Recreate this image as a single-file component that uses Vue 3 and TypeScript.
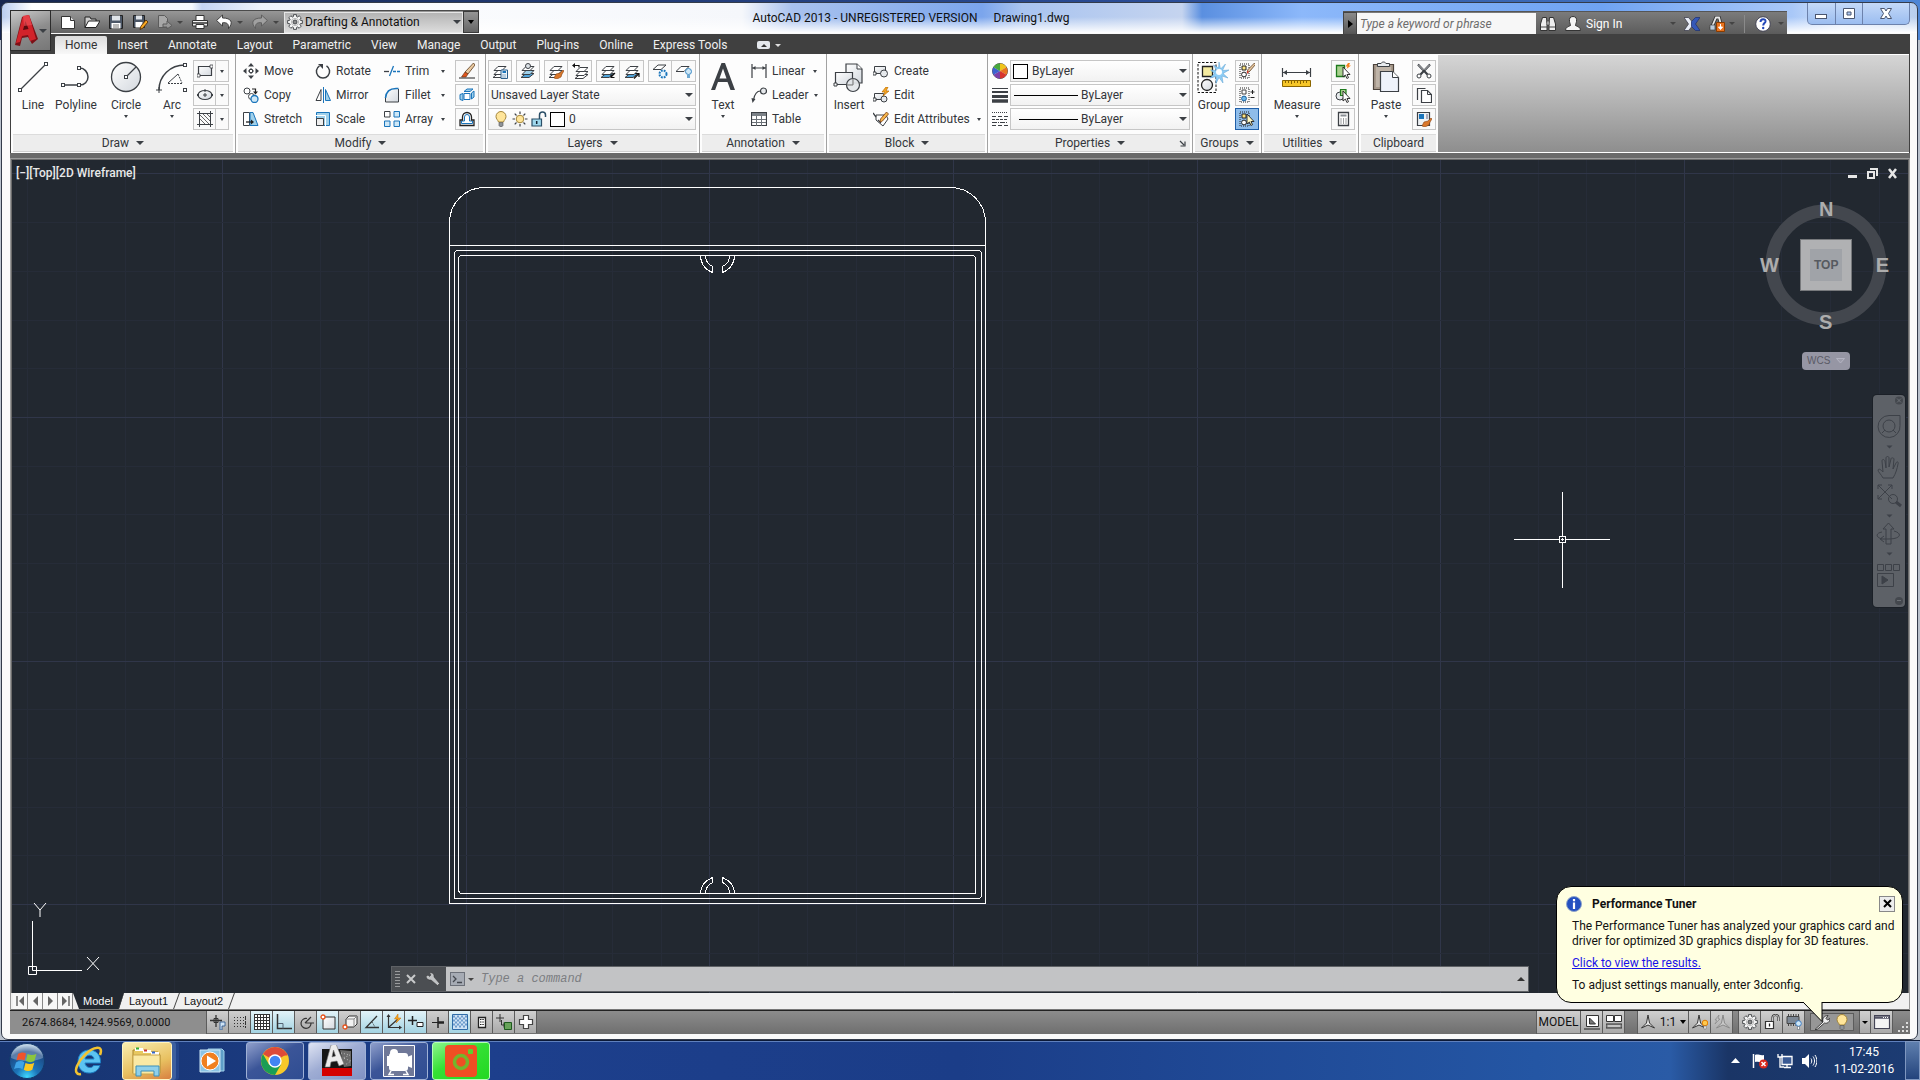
<script setup lang="ts">
import { computed, ref } from 'vue'

const sq = (x: number, y: number, s = 3) =>
  `<rect x="${x - s / 2}" y="${y - s / 2}" width="${s}" height="${s}" fill="#fff" stroke="#3c4045"/>`
const layerStack = (top = '#fff', mid = '#fff', low = '#fff') =>
  `<g stroke="#3c4045" stroke-width="1"><path d="M1 14.500l5-4h8l-5 4z" fill="${low}"/><path d="M2 11.500l4-4h8l-4 4z" fill="${mid}"/><path d="M2 7.500l4-4h8l-4 4z" fill="${top}"/></g>`
const brush = '<path d="M8 11l4-1 3-3 1 1-2 3-1 3-4 2-3-1z" fill="#d9772b" stroke="#8a4413" stroke-width=".6"/>'
const cursor = '<path d="M8 4v10l2.400-2 1.500 3.500 1.600-.8-1.500-3.200h3z" fill="#fff" stroke="#222" stroke-width=".9"/>'
const pick = '<path d="M3 3h4v4h-4z" fill="#ffe680" stroke="#222"/><circle cx="5" cy="11.500" r="2.400" fill="#fff" stroke="#222"/>'
const dots = '<path d="M1 1h9v14h-9z" fill="none" stroke="#222" stroke-dasharray="1 1"/>'

// Outline of an eight-toothed cog centred in a 16px box
const cog = Array.from({ length: 8 }, (_, i) => {
  const base = (i * Math.PI) / 4
  return [[-0.3, 5.600], [-0.2, 7.500], [0.2, 7.500], [0.3, 5.600]]
    .map(([da, r]) => `${(8 + r * Math.cos(base + da)).toFixed(2)} ${(8 + r * Math.sin(base + da)).toFixed(2)}`)
    .join('L')
}).join('L')

const icons: Record<string, string> = {
  line: `<path d="M4 28L28 4" stroke="#3c4045" stroke-width="1.300"/>${sq(3, 29)}${sq(29, 3)}`,
  polyline: `<path d="M4 24h16a8 8 0 0 0 8-8c0-5-4-9-8-9" fill="none" stroke="#3c4045" stroke-width="1.500"/>${sq(3, 24)}${sq(19, 24)}${sq(19, 7)}`,
  circle: `<circle cx="16" cy="16" r="14.500" fill="url(#soft)" stroke="#3c4045" stroke-width="1.300"/><path d="M16 16L26 6" stroke="#3c4045" stroke-width="1.200"/>${sq(16, 16)}`,
  arc: `<path d="M3 29C3 15 14 4 29 4" fill="none" stroke="#3c4045" stroke-width="1.500"/><path d="M12 22L22 13" stroke="#3c4045"/><path d="M12 22.500h15M22 13l4 9" stroke="#3c4045" stroke-dasharray="2 1" fill="none"/><path d="M0 29h6M3 26v6" stroke="#3c4045"/>${sq(29, 4)}${sq(29, 29)}`,
  rect: '<path d="M1.500 3.500h13v9h-13z" fill="url(#soft)" stroke="#3c4045" stroke-width="1.200"/><path d="M0 11h3v3H0zM13 2h3v3h-3z" fill="#fff" stroke="#3c4045" stroke-width=".8"/>',
  ellipse: '<ellipse cx="8" cy="8" rx="7" ry="4.500" fill="url(#soft)" stroke="#3c4045" stroke-width="1.200"/><path d="M6 8h4M8 6v4" stroke="#3c4045"/><path d="M0 7h2v2H0zM7 2.500h2v2H7zM14 7h2v2h-2z" fill="#3c4045"/>',
  hatch: '<path d="M0 2.500h16M0 13.500h16M2.500 0v16M13.500 0v16" stroke="#3c4045"/><path d="M3 8l5 5M3 4l9 9M6 3l7 7M10 3l3 3" stroke="#555" stroke-width=".9"/>',
  move: '<path d="M8 5v6M5 8h6" stroke="#3c4045"/><path d="M8 0l3 3.500H5zM8 16l3-3.500H5zM0 8l3.500-3v6zM16 8l-3.500-3v6z" fill="#3c4045"/><path d="M6.500 6.500h3v3h-3z" fill="#fff" stroke="#3c4045"/>',
  copy: '<circle cx="4" cy="4" r="3" fill="#fff" stroke="#3c4045"/><path d="M9 2h3.500v3" fill="none" stroke="#222" stroke-width="1.200"/><path d="M10 4.500h5l-2.500 3z" fill="#222"/><circle cx="8.500" cy="9.500" r="3" fill="#fff" stroke="#3c4045"/><circle cx="11.500" cy="12" r="3.500" fill="#cfe8f7" stroke="#1b75bb" stroke-width="1.300"/>',
  stretch: '<path d="M.5 1.500h6v13h-6z" fill="#fff" stroke="#3c4045"/><path d="M7 1.500h3l5 13H7z" fill="#9fd0ea" stroke="#1b75bb"/><path d="M3 11h6" stroke="#222" stroke-width="1.300"/><path d="M8 8.500l3 2.500-3 2.500z" fill="#222"/>',
  rotate: '<path d="M4.500 2.800A6.600 6.600 0 1 0 11.500 2.800" fill="none" stroke="#3c4045" stroke-width="1.500"/><path d="M3 1h5v5z" fill="#3c4045"/>',
  mirror: '<path d="M6 2.500v11H1z" fill="#fff" stroke="#3c4045"/><path d="M8.500 0v16" stroke="#1b75bb"/><path d="M10.500 2.500v11H15.500z" fill="#9fd0ea" stroke="#1b75bb"/>',
  scale: '<path d="M1.500 1.500h13v13h-13z" fill="#9fd0ea" stroke="#1b75bb"/><path d="M1.500 7.500h7v7h-7z" fill="#eee" stroke="#3c4045"/><path d="M1 4.500h9.500V15" fill="none" stroke="#fff"/>',
  trim: '<path d="M0 8.500h5" stroke="#3c4045" stroke-width="1.300"/><path d="M5.500 13L9.500 3" stroke="#1b75bb" stroke-width="1.300"/><path d="M9 8.500h7" stroke="#1b75bb" stroke-width="1.300" stroke-dasharray="3 1"/>',
  fillet: '<path d="M1.500 15C1.500 7 7 1.500 15 1.500V15z" fill="url(#soft)"/><path d="M1.500 10v5h13V2" fill="none" stroke="#3c4045"/><path d="M1.500 11C2 5 6 1.500 12 1.500h2.500" fill="none" stroke="#1b75bb" stroke-width="1.600"/>',
  array: '<path d="M.5 .5h5.500v5.500H.5z" fill="#fff" stroke="#3c4045"/><path d="M10 .5h5.500v5.500H10zM.5 10h5.500v5.500H.5zM10 10h5.500v5.500H10z" fill="#cfe8f7" stroke="#1b75bb"/>',
  erase: '<path d="M0 15h16" stroke="#222"/><path d="M14.500 0l1.500 2-7 9-3-2z" fill="#e9c9a0" stroke="#5a3c1e" stroke-width=".8"/><path d="M6 9l3 2-2 3H2.500z" fill="#e0551b" stroke="#5a2a10" stroke-width=".6"/>',
  explode: '<path d="M5 6.500h6v6H5z" fill="#fff" stroke="#1b75bb"/><path d="M1 7.500l3-1v7l-3-1zM12.500 6l2.500-2v6l-2.500 2zM5 4.500l3-2.500h6l-3 2.500z" fill="#9fd0ea" stroke="#1b75bb"/>',
  offset: '<path d="M5.500 10V6a2.500 2.500 0 0 1 5 0v4h3v2.500h-11V10z" fill="#fff" stroke="#1b75bb"/><path d="M1 14.500V9h2.500V6a4.500 4.500 0 0 1 9 0v3H15v5.500z" fill="none" stroke="#222" stroke-width="1.300"/>',
  layprops: layerStack() + '<path d="M9 7h6.500v8.500H9z" fill="#eaf4fb" stroke="#2c5f8c"/><path d="M10.500 9h3.500" stroke="#1b75bb" stroke-width="2"/><path d="M10.500 12h3.500M10.500 14h3.500" stroke="#2c5f8c" stroke-dasharray="1 1"/>',
  laycur: layerStack('#fff', '#9fd0ea', '#4fa5dc') + '<circle cx="8" cy="3" r="2.500" fill="#dde3e8" stroke="#3c4045"/>',
  laymatch: layerStack() + brush,
  layprev: `<g transform="translate(2 1)">${layerStack()}</g><path d="M0 2.500h6" stroke="#fff" stroke-width="4"/><path d="M2 2.500h5v2" fill="none" stroke="#111" stroke-width="1.200"/><path d="M0 2.500l3-2.500v5z" fill="#111"/>`,
  layiso: layerStack('#fff', '#fff', '#4fa5dc') + '<path d="M15 10l-4 4M11 11v3.500h3.500" fill="none" stroke="#111" stroke-width="1.200"/>',
  layuniso: layerStack('#fff', '#fff', '#4fa5dc') + '<path d="M10 15.500l5-5M11.500 10.500H15V14" fill="none" stroke="#111" stroke-width="1.200"/>',
  layfreeze: '<path d="M1 6.500l5-4.500h8l-5 4.500z" fill="#fff" stroke="#3c4045"/><circle cx="11" cy="11" r="3.500" fill="#eaf6fd" stroke="#1b75bb" stroke-width="2" stroke-dasharray="1.800 1"/>',
  layoff: '<path d="M0 8.500l5-5h8l-5 5z" fill="#fff" stroke="#3c4045"/><circle cx="12.500" cy="8.500" r="3" fill="#cfe8f7" stroke="#3c8ac4"/><path d="M11 12h3v3h-3z" fill="#6fa9d2"/>',
  bulb: '<path d="M5.500 11C5 9 3 8 3 5.500a5 5 0 0 1 10 0C13 8 11 9 10.500 11z" fill="#ffe59a" stroke="#a3853a"/><path d="M6 11.500h4v3l-1 1.200H7l-1-1.200z" fill="#8d9297" stroke="#555" stroke-width=".6"/>',
  sun: '<circle cx="8" cy="8" r="3.800" fill="#ffe59a" stroke="#a3853a"/><path d="M8 .5v2.500M8 13v2.500M.5 8H3M13 8h2.500M2.700 2.700l1.800 1.800M11.500 11.500l1.800 1.800M13.300 2.700l-1.800 1.800M4.500 11.500l-1.800 1.800" stroke="#3c4045" stroke-width="1.200"/>',
  unlock: '<path d="M1 8h9.500v7H1z" fill="#9fd8ee" stroke="#2a4e66" stroke-width="1.200"/><path d="M8.500 8V4a3 3 0 0 1 6 0v2" fill="none" stroke="#2a4e66" stroke-width="1.500"/><path d="M5.700 10v3" stroke="#123" stroke-width="1.500"/>',
  text: '<path d="M4 29L14.500 2h3.500L28 29h-4.500l-3-8h-9.500l-2.900 8zM12.500 17.500h7L16 7.500z" fill="#3c4045" fill-rule="evenodd"/>',
  linear: '<path d="M1 1v14M15 1v14M1 5h14" stroke="#3c4045" stroke-width="1.200" fill="none"/><path d="M1.500 5l3-2v4zM14.500 5l-3-2v4z" fill="#3c4045"/>',
  leader: '<circle cx="12.500" cy="4" r="3" fill="#e6e9ec" stroke="#3c4045" stroke-width="1.200"/><path d="M9.500 4C6 4 3.500 7 2.500 13" fill="none" stroke="#3c4045" stroke-width="1.200"/><path d="M1.500 16L.5 11l4 1z" fill="#3c4045"/>',
  table: '<path d="M.5 1.500h15v13H.5z" fill="#fff" stroke="#3c4045" stroke-width="1.200"/><path d="M1 2h14v3H1z" fill="#7b8187"/><path d="M5.500 5v10M10.500 5v10M1 8.500h14M1 11.500h14" stroke="#6b7177"/>',
  insert: '<path d="M13 3h11l5 5v14H13z" fill="url(#soft)" stroke="#3c4045" stroke-width="1.200"/><path d="M24 3v5h5" fill="#fff" stroke="#3c4045"/><path d="M2.500 11.500h17v12h-17z" fill="url(#soft)" stroke="#3c4045" stroke-width="1.200"/><circle cx="20" cy="24" r="6.500" fill="#e2e5e9" fill-opacity=".9" stroke="#3c4045" stroke-width="1.200"/><path d="M20 17.500V24h-6.500" fill="none" stroke="#777"/><path d="M1 22h3v3H1z" fill="#fff" stroke="#3c4045"/>',
  create: '<path d="M1.500 3.500h11v7h-11z" fill="url(#soft)" stroke="#3c4045"/><circle cx="11" cy="10.500" r="3.500" fill="#e6e9ec" stroke="#3c4045"/><path d="M0 9h3v3H0z" fill="#fff" stroke="#3c4045"/>',
  edit: '<path d="M1.500 6.500h9v6h-9z" fill="url(#soft)" stroke="#3c4045"/><circle cx="11" cy="12" r="3" fill="#e6e9ec" stroke="#3c4045"/><path d="M0 11h3v3H0z" fill="#fff" stroke="#3c4045"/><path d="M13 0L9 5h3l-2 4 6-5h-3l2-4z" fill="#f7a823" stroke="#b86a00" stroke-width=".7"/>',
  editattr: '<path d="M3 4h10l2 4-5 7-7-6z" fill="#fff" stroke="#3c4045"/><path d="M0 2l3 4M5 9l3 3" stroke="#3c4045" stroke-width="1.300"/><path d="M13.500 1l2 2-6 7-2.500 1 .5-3z" fill="#f7b64a" stroke="#7a3c10" stroke-width=".8"/>',
  color: '<circle cx="8" cy="8" r="7.500" fill="#ddd" stroke="#555"/><path d="M8 8V.5a7.500 7.500 0 0 1 6.500 3.800z" fill="#f0c419"/><path d="M8 8l6.500-3.700a7.500 7.500 0 0 1 0 7.500z" fill="#e8731f"/><path d="M8 8l6.500 3.800A7.500 7.500 0 0 1 8 15.500z" fill="#d8342c"/><path d="M8 8v7.500a7.500 7.500 0 0 1-6.500-3.700z" fill="#7c3fa8"/><path d="M8 8l-6.500 3.800a7.500 7.500 0 0 1 0-7.500z" fill="#3c62d0"/><path d="M8 8L1.500 4.300A7.500 7.500 0 0 1 8 .5z" fill="#48a83c"/>',
  weight: '<path d="M0 1.500h16" stroke="#3c4045"/><path d="M0 5h16" stroke="#3c4045" stroke-width="2"/><path d="M0 9.500h16" stroke="#3c4045" stroke-width="3"/><path d="M0 14h16" stroke="#3c4045" stroke-width="3.500"/>',
  ltype: '<g stroke="#3c4045"><path d="M0 1.500h16" stroke-dasharray="1 1"/><path d="M0 5.500h16" stroke-dasharray="4 2"/><path d="M0 8.500h16" stroke-dasharray="3 1"/><path d="M0 11.500h16" stroke-dasharray="5 1 1 1"/><path d="M0 14.500h16" stroke-dasharray="4 2"/></g>',
  group: '<path d="M1 1.500h18v30H1z" fill="none" stroke="#111" stroke-dasharray="2.500 1.500"/><path d="M5.500 5.500h10v10h-10z" fill="#f5eba0" stroke="#222" stroke-width="1.300"/><circle cx="10" cy="24" r="5.500" fill="url(#soft)" stroke="#222" stroke-width="1.300"/><path d="M22 1l1.500 7 5-5-3 6.500 6.500-.5-6 3.500 5 4.500-6-2 1 7-4-5.500-3 6v-7l-6 1.500 4.500-4.500-4-3.500 6 .5-3-5.500 5 3z" fill="#8ecdf5" stroke="#5a9fd0" stroke-width=".5"/><circle cx="22" cy="11" r="3" fill="#fff"/>',
  ungroup: dots + pick + '<path d="M15.500 0l1 1.500-6 7-2.500 1 1-3z" fill="#e9c9a0" stroke="#5a3c1e" stroke-width=".8"/><path d="M8 7.500l2 1.500-2 2z" fill="#d8342c"/>',
  groupedit: '<path d="M1 1h9v14h-9z" fill="none" stroke="#222" stroke-dasharray="1 1"/><path d="M3 3h4v4h-4z" fill="#fff" stroke="#444"/><circle cx="5" cy="11.500" r="2.400" fill="#6cb8ea" stroke="#1b5f9c"/><path d="M11.500 5h4M13.500 3v4M11.500 10.500h4" stroke="#222"/>',
  groupsel: dots + pick + '<path d="M8 3v10l2.400-2 1.500 3.500 1.600-.8-1.500-3.200h3z" fill="#fff8c0" stroke="#222" stroke-width=".9"/>',
  measure: '<path d="M1.500 7v9M29.500 7v9M2 11.500h27" stroke="#3c4045" stroke-width="1.200"/><path d="M2 11.500l4-2.500v5zM29 11.500l-4-2.500v5z" fill="#3c4045"/><path d="M1.500 19.500h28v6h-28z" fill="#f6c628" stroke="#8a6500"/><path d="M4.500 20v2M7.500 20v2M10.500 20v3M13.500 20v2M16.500 20v2M19.500 20v3M22.500 20v2M25.500 20v2" stroke="#8a6500"/>',
  qselect: '<path d="M1.500 2.500h8v11h-8z" fill="#a9d08e" stroke="#1d7a1d" stroke-width="1.300"/>' + cursor + '<path d="M13 0l-2.500 3.500h2L11.500 6 16 2.500h-2L15 0z" fill="#f58220"/>',
  selall: '<circle cx="5" cy="9" r="4" fill="#e6e9ec" stroke="#3c4045"/><path d="M5.500 2.500h5.500v6h-5.500z" fill="#a9d08e" stroke="#1d7a1d" stroke-width="1.200"/>' + cursor,
  calc: '<path d="M3.500 1.500h10v13h-10z" fill="#fff" stroke="#3c4045" stroke-width="1.300"/><path d="M5.500 3.500h6v2h-6z" fill="#8a8f94"/><path d="M5.500 8h6M5.500 10h6M5.500 12h6" stroke="#3c4045" stroke-dasharray="1 1.500"/>',
  paste: '<path d="M3.500 3.500h20v25h-20z" fill="#a89a8c" stroke="#4d443c" stroke-width="1.200"/><path d="M6 6h15v20H6z" fill="#bfb4a8"/><path d="M7.500 5.500v-3h3.500c1-2 4-2 5 0h3.500v3z" fill="#e9ecef" stroke="#3c4045"/><path d="M10.500 10.500h12l6 6v14h-18z" fill="#eef2fa" stroke="#3c4045" stroke-width="1.200"/><path d="M22.500 10.500v6h6" fill="#fff" stroke="#3c4045"/>',
  cut: '<path d="M2 1.500l9.500 10M14 1.500L4.500 11.500" fill="none" stroke="#3c4045" stroke-width="2.200"/><path d="M2.500 2l5 5M13.500 2l-5 5" stroke="#fff" stroke-width=".7"/><circle cx="3" cy="13" r="2" fill="#fff" stroke="#3c4045"/><circle cx="13" cy="13" r="2" fill="#fff" stroke="#3c4045"/>',
  copyclip: '<path d="M1.500 13V1.500h8" fill="none" stroke="#3c4045" stroke-width="1.200"/><path d="M5.500 3.500h6l4 4v8h-10z" fill="#fff" stroke="#3c4045" stroke-width="1.200"/><path d="M11.500 3.500v4h4" fill="none" stroke="#3c4045"/>',
  matchprop: '<path d="M1.500 1.500h12v13h-12z" fill="#eef2f5" stroke="#3c4045" stroke-width="1.200"/><path d="M3 3h5v5H3z" fill="#1b75bb"/><path d="M10 3h2v5h-2z" fill="#aab"/>' + brush,
  new: '<path d="M1.500 2.500h9l4 4v8h-13z" fill="#fff" stroke="#333"/><path d="M10.500 2.500v4h4" fill="#ddd" stroke="#333"/>',
  open: '<path d="M1 13.500V3h5l1 2h5v2" fill="#ccc" stroke="#222"/><path d="M1 13.500L4.500 7H16l-4 6.500z" fill="#fff" stroke="#222"/>',
  save: '<path d="M1.500 1.500h13v13h-13z" fill="#4b5666" stroke="#222"/><path d="M4 1.500h8v5H4z" fill="#dfe3e8"/><path d="M3.500 9h9v5.500h-9z" fill="#fff"/><path d="M5 11h6M5 13h6" stroke="#777"/>',
  saveas: '<path d="M1.500 1.500h11v12h-11z" fill="#4b5666" stroke="#222"/><path d="M4 1.500h6v4H4z" fill="#dfe3e8"/><path d="M3.500 8h7v5.500h-7z" fill="#fff"/><path d="M14 6l2 2-5 6-3 1.500 1-3.500z" fill="#f7a823" stroke="#4a2500" stroke-width=".8"/>',
  export: '<path d="M2.500 1.500h6l3 3v9h-9z" fill="#a8a8a8" stroke="#5c5c5c"/><path d="M7 10h4V7l5 4.500L11 15v-2H7z" fill="#999" stroke="#5c5c5c"/>',
  print: '<path d="M4 1.500h8V7H4z" fill="#fff" stroke="#333"/><path d="M.5 6.500h15V12H.5z" fill="#f2f2f2" stroke="#333"/><path d="M1 9h14" stroke="#333" stroke-width="1.500"/><path d="M4 10.500h8v4H4z" fill="#fff" stroke="#333"/>',
  undo: '<path d="M6.500 1L.6 6.500 6.500 12V8.800c4-.6 6.500.7 6 5.700 5-6 3-10.500-6-10.500z" fill="#fff" stroke="#333" stroke-width=".9"/>',
  redo: '<path d="M9.500 1l5.900 5.500L9.500 12V8.800c-4-.6-6.500.7-6 5.700C-1.500 8.500.5 4 9.500 4z" fill="#a0a0a0" stroke="#5a5a5a" stroke-width=".9"/>',
  gear: `<path d="M${cog}z" fill="#f4f4f4" stroke="#3c3f43" stroke-width=".9"/><circle cx="8" cy="8" r="3.600" fill="none" stroke="#aaa" stroke-width=".8"/><circle cx="8" cy="8" r="2" fill="#888" stroke="#3c3f43" stroke-width=".9"/>`,
  binoculars: '<path d="M2.500 1.500h4l.5 6v7H.5V8zM9.500 1.500h4l2 6.500v6.500H9v-7z" fill="#eee" stroke="#333"/><path d="M7 5h2v4H7z" fill="#ccc" stroke="#333" stroke-width=".6"/><path d="M1 11h6M9 11h6" stroke="#444"/>',
  user: '<path d="M8 .5c3 0 4 2 3.500 5-.3 2-1 2.500-1 4 2 1 5 1.500 5 5H.5c0-3.500 3-4 5-5 0-1.500-.7-2-1-4C4 2.500 5 .5 8 .5z" fill="#f4f4f4" stroke="#333"/>',
  exchange: '<path d="M0 1.500h4.500L8 5.500v5l-3.500 4H0L4.500 8z" fill="#e8ecf5" stroke="#334" stroke-width=".7"/><path d="M16 1.500h-4.500L7.500 5.500v5l4 4H16L11.500 8z" fill="#3558b8" stroke="#1c2f6e" stroke-width=".7"/>',
  apps: '<path d="M2 13L7 1.500h3L13 12" fill="none" stroke="#333" stroke-width="3.500"/><path d="M2 13L7 1.500h3L13 12" fill="none" stroke="#e8e8e8" stroke-width="1.800"/><path d="M1 9h5v5H1z" fill="#bcd" stroke="#444" stroke-width=".7"/><path d="M7.500 6.500h8v9h-8z" fill="#e8731f" stroke="#8a3c00"/><path d="M11.500 8v4M9.500 11l2 2.500 2-2.500z" stroke="#fff" fill="#fff"/>',
  help: '<circle cx="8" cy="8" r="7.300" fill="#fff" stroke="#445"/><path d="M5.500 6c0-4 5.500-3.500 5-.5-.3 1.500-2.300 1.800-2.300 4" fill="none" stroke="#2347b8" stroke-width="2"/><circle cx="8.200" cy="12" r="1.200" fill="#2347b8"/>',
  infer: '<path d="M6 1v12M0 6.500h12" stroke="#333" stroke-width="1.300"/><path d="M4 4.500h4v4H4z" fill="none" stroke="#333"/><path d="M12 8h3v4h-3v4h-2v-8z" fill="#cfe3f5" stroke="#23518a" stroke-width=".8"/>',
  snap: '<path d="M2 3.500h10M2 6.500h10M2 9.500h10M2 12.500h10" stroke="#333" stroke-dasharray="1 2"/><path d="M13.500 2v12" fill="none" stroke="#333" stroke-dasharray="4 1"/>',
  gridmode: '<path d="M0 0h16v16H0z" fill="#fff"/><path d="M.5 0v16M3.500 0v16M6.500 0v16M9.500 0v16M12.500 0v16M15.500 0v16M0 .5h16M0 3.500h16M0 6.500h16M0 9.500h16M0 12.500h16M0 15.500h16" stroke="#333"/>',
  ortho: '<path d="M1.500 0v14.500H16" fill="none" stroke="#333" stroke-width="1.500"/><path d="M2 9.500h5v5" fill="none" stroke="#567"/>',
  polar: '<path d="M13 9a5 5 0 1 1-4-4.500M7 9h9M7 9l6-6" fill="none" stroke="#333" stroke-width="1.200"/>',
  osnap: '<path d="M3 3h12v12H3z" fill="url(#soft)" stroke="#333"/><circle cx="3" cy="3" r="2" fill="#fff" stroke="#e8531b" stroke-width="1.300"/>',
  osnap3: '<path d="M4 5l3-3h8v8l-3 3H4z" fill="#f2f2f2" stroke="#333"/><path d="M4 5h8v8M12 5l3-3" fill="none" stroke="#888"/><circle cx="3" cy="13" r="2" fill="#fff" stroke="#e8531b" stroke-width="1.300"/>',
  otrack: '<path d="M13 2L2 13.500h13" fill="none" stroke="#333" stroke-width="1.300"/><path d="M8 8l3 5" stroke="#333" stroke-dasharray="1 1"/>',
  ducs: '<path d="M2.500 1v12.500H15M3 13L12 5" fill="none" stroke="#333" stroke-width="1.200"/><path d="M2.500 0l2 3h-4zM16 13.500l-3-2v4z" fill="#333"/><path d="M12 0L8.500 5h3L10 9l5-5h-3z" fill="#f7a823" stroke="#c56d00" stroke-width=".5"/>',
  dyn: '<path d="M4.500 2v9M0 6.500h9" stroke="#222" stroke-width="1.500"/><path d="M9 8.500h6v4H9z" fill="#fff" stroke="#222"/>',
  lwt: '<path d="M8 3v11" stroke="#222" stroke-width="1.500"/><path d="M2 8.500h6" stroke="#222"/><path d="M8 8.500h6" stroke="#222" stroke-width="2.500"/>',
  tpy: '<path d="M.5 .5h15v15H.5z" fill="#cfe3f5" stroke="#2f6ca8"/><path d="M1 2.500h14M1 6.500h14M1 10.500h14M3 4.500h12M3 8.500h12M3 12.500h12" stroke="#6d9ccc" stroke-width="2" stroke-dasharray="2 2"/>',
  qp: '<path d="M4.500 3.500h7v10h-7z" fill="#fff" stroke="#222" stroke-width="1.300"/><path d="M6 5.500h4M6 8h4M6 10.500h4" stroke="#222" stroke-dasharray="1.500 .8"/>',
  cycle: '<path d="M4 0v8M0 4h8" stroke="#333"/><path d="M5.500 6v5h3M8 8.500v5h2" fill="none" stroke="#333"/><path d="M8.500 8.500h7v7h-7z" fill="#68a35a" stroke="#1d5a1d"/>',
  monitor: '<path d="M5.500 1.500h5v4h4v5h-4v4h-5v-4h-4v-5h4z" fill="#fff" stroke="#444" stroke-width="1.200"/>',
  layoutIcon: '<path d="M2.500 1.500h12v11h-12z" fill="#fff" stroke="#333"/><path d="M5.500 4v6h6z" fill="#777" stroke="#333"/><path d="M0 15h16" stroke="#222"/>',
  views: '<path d="M.5 1.500h7v6h-7zM8.500 1.500h7v6h-7z" fill="#fff" stroke="#333"/><path d="M0 10h16v4H0z" fill="#999" stroke="#333"/><path d="M2 12h12" stroke="#eee"/>',
  scaleA: '<path d="M8 1l1.500 8 5 5-6.500-3-6.500 3 5-5z" fill="#eee" stroke="#333"/>',
  scaleVis: '<path d="M7 1l1.500 8 5 5-6.500-3-6.500 3 5-5z" fill="#eee" stroke="#333"/><circle cx="13" cy="9" r="2.800" fill="#ffc94d" stroke="#e07b00"/><path d="M12 12h2v3h-2z" fill="#fff" stroke="#666" stroke-width=".5"/>',
  scaleAuto: '<path d="M9 1l1.500 8 5 5-6.500-3-6.500 3 5-5z" fill="#c9c9c9" stroke="#888"/><path d="M5 1L1 6h2L1 10l5-5H4z" fill="#c9c9c9" stroke="#888" stroke-width=".7"/>',
  lockUi: '<path d="M1.500 7.500h8v7h-8z" fill="#fff" stroke="#333" stroke-width="1.200"/><path d="M8.500 7V4a3 3 0 0 1 6 0v3" fill="none" stroke="#333" stroke-width="2.200"/><path d="M8.500 7V4a3 3 0 0 1 6 0v3" fill="none" stroke="#eee" stroke-width=".8"/><path d="M5.500 9.500v3" stroke="#222" stroke-width="1.300"/>',
  hardware: '<path d="M1 2.500h12v7H1z" fill="#7c8794" stroke="#444"/><path d="M2 11h11M2 1h11" stroke="#444" stroke-dasharray="1 1.500" stroke-width="2"/><circle cx="12.500" cy="9.500" r="2.800" fill="#cfe8f7" stroke="#3c7cc4"/><path d="M11.500 12.500h2v3h-2z" fill="#fff" stroke="#456" stroke-width=".5"/>',
  wrench: '<path d="M1 15.500L9 8c-1-3 1-6.500 5-6.500l-2 3 1.500 1.500 2.500-1.500c0 3.500-3 5.500-5.500 4.500L3 15.500z" fill="#f0f0f0" stroke="#333" stroke-width=".9"/>',
  clean: '<path d="M.5 1.500h15v13H.5z" fill="#f4f4f4" stroke="#445" stroke-width="1.200"/><path d="M1 3.500h14" stroke="#556" stroke-width="2.500"/><path d="M9 3.500h5" stroke="#fff" stroke-dasharray="1 1"/>',
}

interface ToolItem { icon: string; label: string; arrow?: boolean }
interface Tab { label: string }

const tabs: Tab[] = ['Home', 'Insert', 'Annotate', 'Layout', 'Parametric', 'View', 'Manage', 'Output', 'Plug-ins', 'Online', 'Express Tools'].map(label => ({ label }))
const activeTab = ref('Home')

const drawTools: (ToolItem & { size: string })[] = [
  { icon: 'line', label: 'Line', size: 'w42' },
  { icon: 'polyline', label: 'Polyline', size: 'w44' },
  { icon: 'circle', label: 'Circle', arrow: true, size: 'w56' },
  { icon: 'arc', label: 'Arc', arrow: true, size: 'w36' },
]
const modifyColumns: ToolItem[][] = [
  [{ icon: 'move', label: 'Move' }, { icon: 'copy', label: 'Copy' }, { icon: 'stretch', label: 'Stretch' }],
  [{ icon: 'rotate', label: 'Rotate' }, { icon: 'mirror', label: 'Mirror' }, { icon: 'scale', label: 'Scale' }],
  [{ icon: 'trim', label: 'Trim', arrow: true }, { icon: 'fillet', label: 'Fillet', arrow: true }, { icon: 'array', label: 'Array', arrow: true }],
]
const layerGroups = [['layprops'], ['laycur'], ['laymatch', 'layprev'], ['layiso', 'layuniso'], ['layfreeze', 'layoff']]
const annotationTools: ToolItem[] = [
  { icon: 'linear', label: 'Linear', arrow: true }, { icon: 'leader', label: 'Leader', arrow: true }, { icon: 'table', label: 'Table' },
]
const blockTools: ToolItem[] = [
  { icon: 'create', label: 'Create' }, { icon: 'edit', label: 'Edit' }, { icon: 'editattr', label: 'Edit Attributes', arrow: true },
]
const toggles = ref([
  ['infer', false], ['snap', false], ['gridmode', true], ['ortho', true], ['polar', false], ['osnap', true], ['osnap3', false],
  ['otrack', true], ['ducs', true], ['dyn', true], ['lwt', false], ['tpy', true], ['qp', false], ['cycle', false], ['monitor', false],
].map(([icon, on]) => ({ icon: icon as string, on: on as boolean })))

const sheets = ['Model', 'Layout1', 'Layout2']
const activeSheet = ref('Model')

const gridStep = 48.72
const gridLines = (first: number, majorAt: number, count: number) =>
  Array.from({ length: count }, (_, i) => ({ at: Math.round(first + i * gridStep) + 0.5, major: i % 5 === majorAt }))
const vLines = computed(() => gridLines(15.400, 4, 60))
const hLines = computed(() => gridLines(13.400, 0, 40))
const command = ref('')
const search = ref('')
const showBalloon = ref(true)
</script>

<template>
  <div class="desktop">
    <svg class="defs" width="0" height="0" aria-hidden="true">
      <defs>
        <linearGradient id="soft" x1="0" y1="0" x2="1" y2="1">
          <stop offset="0" stop-color="#ffffff" /><stop offset="1" stop-color="#d3d8de" />
        </linearGradient>
      </defs>
    </svg>

    <main class="window">
      <header class="head">
        <button class="app-menu" aria-label="Application menu">
          <svg width="28" height="34" viewBox="0 0 28 34" aria-hidden="true">
            <path d="M1 31L8 3l7-2 9 24-6 5-4-7-6 1-2 8z" fill="#7d1016" />
            <path d="M2 29L9 2l6-1 7 24-6 2-2-6-6 1-2 6z" fill="#d2232a" />
            <path d="M9 16l2.500-9 3 8z" fill="#5a0a0e" />
            <path d="M9 2l6-1 3 10-8 1z" fill="#f0525a" opacity=".6" />
          </svg>
          <i class="tri lg"></i>
        </button>
        <div class="titlebar">
          <nav class="quick" aria-label="Quick access">
            <button v-for="n in ['new', 'open', 'save', 'saveas', 'export']" :key="n" class="qb" :aria-label="n">
              <svg width="16" height="16" viewBox="0 0 16 16" v-html="icons[n]"></svg>
            </button>
            <i class="tri dim"></i>
            <button class="qb" aria-label="print"><svg width="16" height="16" viewBox="0 0 16 16" v-html="icons.print"></svg></button>
            <button class="qb" aria-label="undo"><svg width="16" height="16" viewBox="0 0 16 16" v-html="icons.undo"></svg></button>
            <i class="tri dim"></i>
            <button class="qb" aria-label="redo"><svg width="16" height="16" viewBox="0 0 16 16" v-html="icons.redo"></svg></button>
            <i class="tri dim"></i>
            <label class="workspace">
              <svg width="16" height="16" viewBox="0 0 16 16" v-html="icons.gear"></svg>
              <select aria-label="Workspace"><option>Drafting &amp; Annotation</option></select>
              <i class="tri lg"></i>
            </label>
            <button class="qmore" aria-label="Customize"><i class="tri lg black"></i></button>
          </nav>
          <h1 class="title"><span>AutoCAD 2013 - UNREGISTERED VERSION</span><span>Drawing1.dwg</span></h1>
          <div class="info">
            <button class="expand" aria-label="Collapse search"><i class="tri-r"></i></button>
            <input v-model="search" type="text" placeholder="Type a keyword or phrase" aria-label="Search">
            <button class="ib" aria-label="Find"><svg width="16" height="16" viewBox="0 0 16 16" v-html="icons.binoculars"></svg></button>
            <button class="signin"><svg width="16" height="16" viewBox="0 0 16 16" v-html="icons.user"></svg>Sign In<i class="tri dim"></i></button>
            <button class="ib" aria-label="Exchange"><svg width="16" height="16" viewBox="0 0 16 16" v-html="icons.exchange"></svg></button>
            <button class="ib" aria-label="Apps"><svg width="16" height="16" viewBox="0 0 16 16" v-html="icons.apps"></svg></button>
            <i class="tri dim"></i>
            <span class="rule"></span>
            <button class="ib" aria-label="Help"><svg width="16" height="16" viewBox="0 0 16 16" v-html="icons.help"></svg></button>
            <i class="tri dim"></i>
          </div>
          <div class="wctl">
            <button aria-label="Minimize"><svg width="14" height="12" viewBox="0 0 14 12"><rect x="1.500" y="6.500" width="11" height="4" fill="#fff" stroke="#4a5670" /></svg></button>
            <button aria-label="Restore"><svg width="14" height="12" viewBox="0 0 14 12"><path d="M1.500 .5h11v10h-11zM5 4v3h4V4z" fill="#fff" stroke="#4a5670" fill-rule="evenodd" /></svg></button>
            <button class="wide" aria-label="Close"><svg width="14" height="12" viewBox="0 0 14 12"><path d="M1.500 .5h4L7 3l1.500-2.500h4L9.500 5.500l3 5h-4L7 8l-1.500 2.500h-4l3-5z" fill="#fff" stroke="#4a5670" /></svg></button>
          </div>
        </div>
        <nav class="tabs" aria-label="Ribbon tabs">
          <button v-for="t in tabs" :key="t.label" :class="{ active: t.label === activeTab }" @click="activeTab = t.label">{{ t.label }}</button>
          <button class="ribmin" aria-label="Minimize ribbon"><span class="pill"><i class="tri-u"></i></span><i class="tri light"></i></button>
        </nav>
      </header>

      <section class="ribbon">
        <section class="panel draw">
          <div class="pbody">
            <button v-for="t in drawTools" :key="t.icon" class="big" :class="t.size">
              <svg width="32" height="32" viewBox="0 0 32 32" v-html="icons[t.icon]"></svg>
              <span>{{ t.label }}</span><i v-if="t.arrow" class="tri"></i>
            </button>
            <div class="smalls split">
              <button v-for="n in ['rect', 'ellipse', 'hatch']" :key="n" class="small" :aria-label="n">
                <svg width="16" height="16" viewBox="0 0 16 16" v-html="icons[n]"></svg><span class="drop"><i class="tri"></i></span>
              </button>
            </div>
          </div>
          <button class="ptitle">Draw<i class="tri lg"></i></button>
        </section>

        <section class="panel modify">
          <div class="pbody">
            <div v-for="(col, i) in modifyColumns" :key="i" class="rows" :class="'mc' + i">
              <button v-for="t in col" :key="t.icon" class="row"><svg width="16" height="16" viewBox="0 0 16 16" v-html="icons[t.icon]"></svg><span>{{ t.label }}</span><i v-if="t.arrow" class="tri"></i></button>
            </div>
            <div class="smalls">
              <button v-for="n in ['erase', 'explode', 'offset']" :key="n" class="small" :aria-label="n"><svg width="16" height="16" viewBox="0 0 16 16" v-html="icons[n]"></svg></button>
            </div>
          </div>
          <button class="ptitle">Modify<i class="tri lg"></i></button>
        </section>

        <section class="panel layers">
          <div class="pbody stack">
            <div class="lgroups">
              <div v-for="(g, i) in layerGroups" :key="i" class="lgroup">
                <button v-for="n in g" :key="n" class="small" :aria-label="n"><svg width="16" height="16" viewBox="0 0 16 16" v-html="icons[n]"></svg></button>
              </div>
            </div>
            <label class="combo"><select aria-label="Layer state"><option>Unsaved Layer State</option></select><i class="tri lg"></i></label>
            <label class="combo lamp">
              <svg width="16" height="16" viewBox="0 0 16 16" v-html="icons.bulb"></svg>
              <svg width="16" height="16" viewBox="0 0 16 16" v-html="icons.sun"></svg>
              <svg width="16" height="16" viewBox="0 0 16 16" v-html="icons.unlock"></svg>
              <span class="swatch"></span>
              <select aria-label="Layer"><option>0</option></select><i class="tri lg"></i>
            </label>
          </div>
          <button class="ptitle">Layers<i class="tri lg"></i></button>
        </section>

        <section class="panel annotation">
          <div class="pbody">
            <button class="big w44"><svg width="32" height="32" viewBox="0 0 32 32" v-html="icons.text"></svg><span>Text</span><i class="tri"></i></button>
            <div class="rows">
              <button v-for="t in annotationTools" :key="t.icon" class="row"><svg width="16" height="16" viewBox="0 0 16 16" v-html="icons[t.icon]"></svg><span>{{ t.label }}</span><i v-if="t.arrow" class="tri"></i></button>
            </div>
          </div>
          <button class="ptitle">Annotation<i class="tri lg"></i></button>
        </section>

        <section class="panel block">
          <div class="pbody">
            <button class="big w42"><svg width="32" height="32" viewBox="0 0 32 32" v-html="icons.insert"></svg><span>Insert</span></button>
            <div class="rows">
              <button v-for="t in blockTools" :key="t.icon" class="row"><svg width="16" height="16" viewBox="0 0 16 16" v-html="icons[t.icon]"></svg><span>{{ t.label }}</span><i v-if="t.arrow" class="tri"></i></button>
            </div>
          </div>
          <button class="ptitle">Block<i class="tri lg"></i></button>
        </section>

        <section class="panel props">
          <div class="pbody stack">
            <div class="prow"><svg width="16" height="16" viewBox="0 0 16 16" v-html="icons.color"></svg>
              <label class="combo"><span class="swatch"></span><select aria-label="Color"><option>ByLayer</option></select><i class="tri lg"></i></label></div>
            <div class="prow"><svg width="16" height="16" viewBox="0 0 16 16" v-html="icons.weight"></svg>
              <label class="combo"><span class="stroke long"></span><select aria-label="Lineweight"><option>ByLayer</option></select><i class="tri lg"></i></label></div>
            <div class="prow"><svg width="16" height="16" viewBox="0 0 16 16" v-html="icons.ltype"></svg>
              <label class="combo"><span class="stroke"></span><select aria-label="Linetype"><option>ByLayer</option></select><i class="tri lg"></i></label></div>
          </div>
          <button class="ptitle">Properties<i class="tri lg"></i>
            <svg class="launch" width="7" height="7" viewBox="0 0 7 7"><path d="M1 1l4 4M6 1.500V6H1.500" fill="none" stroke="#3c4045" stroke-width="1.200" /></svg>
          </button>
        </section>

        <section class="panel groups">
          <div class="pbody">
            <button class="big w42"><svg width="34" height="34" viewBox="0 0 34 34" v-html="icons.group"></svg><span>Group</span></button>
            <div class="smalls">
              <button class="small" aria-label="Ungroup"><svg width="16" height="16" viewBox="0 0 16 16" v-html="icons.ungroup"></svg></button>
              <button class="small" aria-label="Group edit"><svg width="16" height="16" viewBox="0 0 16 16" v-html="icons.groupedit"></svg></button>
              <button class="small on" aria-label="Group selection" aria-pressed="true"><svg width="16" height="16" viewBox="0 0 16 16" v-html="icons.groupsel"></svg></button>
            </div>
          </div>
          <button class="ptitle">Groups<i class="tri lg"></i></button>
        </section>

        <section class="panel utilities">
          <div class="pbody">
            <button class="big w56"><svg width="32" height="32" viewBox="0 0 32 32" v-html="icons.measure"></svg><span>Measure</span><i class="tri"></i></button>
            <div class="smalls">
              <button v-for="n in ['qselect', 'selall', 'calc']" :key="n" class="small" :aria-label="n"><svg width="16" height="16" viewBox="0 0 16 16" v-html="icons[n]"></svg></button>
            </div>
          </div>
          <button class="ptitle">Utilities<i class="tri lg"></i></button>
        </section>

        <section class="panel clipboard">
          <div class="pbody">
            <button class="big w42"><svg width="32" height="32" viewBox="0 0 32 32" v-html="icons.paste"></svg><span>Paste</span><i class="tri"></i></button>
            <div class="smalls">
              <button v-for="n in ['cut', 'copyclip', 'matchprop']" :key="n" class="small" :aria-label="n"><svg width="16" height="16" viewBox="0 0 16 16" v-html="icons[n]"></svg></button>
            </div>
          </div>
          <button class="ptitle">Clipboard</button>
        </section>
      </section>

      <section class="workspace-area">
        <div class="canvas">
          <svg class="drawing" width="100%" height="100%" aria-hidden="true">
            <g fill="none" shape-rendering="crispEdges">
              <line v-for="l in vLines" :key="'v' + l.at" :x1="l.at" :x2="l.at" y1="0" y2="100%" :stroke="l.major ? '#303649' : '#262c38'" />
              <line v-for="l in hLines" :key="'h' + l.at" :y1="l.at" :y2="l.at" x1="0" x2="100%" :stroke="l.major ? '#303649' : '#262c38'" />
            </g>
            <g fill="none" stroke="#fff" shape-rendering="crispEdges">
              <path d="M437.500 743.500V62A35 35 0 0 1 472 27.500H939A35 35 0 0 1 973.500 62V743.500z" />
              <path d="M437.500 85.500h536" />
              <path d="M442.500 738.500V92.500l2-2H967.500l2 2V736.500l-2 2z" />
              <path d="M446.500 731V97.500l2-2H961.500l2 2V733.500H448.500z" />
              <path d="M688.500 95.500c0 9 5 14 12 17v-6c-4-2-7-6-7-11M722.500 95.500c0 9-5 14-12 17v-6c5-2 7-6 7-11" />
              <path d="M688.500 733.500c0-9 5-13 12-16v5c-4 2-7 6-7 11M722.500 733.500c0-9-5-13-12-16v5c5 2 7 6 7 11" />
              <path d="M1550.500 332v44M1550.500 383v45M1502 379.500h45M1554 379.500h44M1550.500 378v3M1549 379.500h3" />
              <path d="M1547.500 376.500h6v6h-6z" />
            </g>
          </svg>

          <span class="vplabel">[−][Top][2D Wireframe]</span>
          <div class="vpctl">
            <button aria-label="Minimize drawing"><svg width="11" height="11" viewBox="0 0 11 11"><path d="M1 7h9v3H1z" fill="#e6e6e6" /></svg></button>
            <button aria-label="Restore drawing"><svg width="11" height="11" viewBox="0 0 11 11"><path d="M3 0h8v8H9V2H3z" fill="#e6e6e6" /><path d="M1 4h6v6H1z" fill="none" stroke="#e6e6e6" stroke-width="2" /></svg></button>
            <button aria-label="Close drawing"><svg width="11" height="11" viewBox="0 0 11 11"><path d="M2 1l7 9M9 1L2 10" stroke="#e6e6e6" stroke-width="2.500" /></svg></button>
          </div>

          <svg class="ucs" width="92" height="80" viewBox="0 0 92 80" aria-hidden="true">
            <g fill="none" stroke="#fff"><path d="M12.500 20v49.500H62M8.500 65.500h8v8h-8zM14 2l6 7 6-7M20 9v7M67 56l12 13M79 56L67 69" /></g>
          </svg>

          <div class="cube">
            <svg width="132" height="134" viewBox="0 0 132 134" aria-hidden="true">
              <circle cx="66" cy="67" r="54" fill="none" stroke="#43474e" stroke-width="13" />
              <rect x="40.500" y="41.500" width="51" height="51" fill="#b0b1b3" stroke="#77797c" />
              <rect x="50" y="51" width="32" height="32" fill="#a0a3a8" />
            </svg>
            <b class="n">N</b><b class="s">S</b><b class="w">W</b><b class="e">E</b><b class="top">TOP</b>
          </div>
          <button class="wcs">WCS<svg width="9" height="6" viewBox="0 0 9 6"><path d="M.5 .5h8L4.500 5z" fill="#9d9dab" stroke="#b4b4c2" /></svg></button>

          <div class="navbar">
            <svg width="32" height="212" viewBox="0 0 32 212" fill="none" stroke="#3d4148" aria-hidden="true">
              <circle cx="26" cy="5.500" r="4" fill="#44484e" stroke="none" /><path d="M24 3.500l4 4M28 3.500l-4 4" stroke="#6c7076" />
              <path d="M16 20.500h11v10a11 11 0 1 1-11-10z" /><circle cx="16" cy="31" r="6" /><path d="M9 38l3-3M23 38l-3-3" />
              <path d="M13.500 50.500h6l-3 3z" fill="#3d4148" stroke="none" />
              <path d="M10 83c-2-4-5-6-5-8 1-2 3 0 5 2l-1-11c0-2 2-2 3 0l1 7V63c0-2 3-2 3 0v9l2-8c0-2 3-1 3 0l-1 10 3-6c1-2 3-1 2 1-1 5-2 9-5 14z" />
              <path d="M5 90l14 14M19 90L5 104M5 94v-4h4M15 90h4v4M5 100v4h4" /><circle cx="20" cy="104" r="4.500" /><path d="M23 107l5 4" stroke-width="3" />
              <path d="M13.500 119.500h6l-3 3z" fill="#3d4148" stroke="none" />
              <path d="M13 149v-15h-3l5.500-6 5.500 6h-3v15zM9 144c-7-2-6-6 0-7M21 136c8 2 8 8-6 8H8M11 141l-4 3 4 3" />
              <path d="M13.500 157.500h6l-3 3z" fill="#3d4148" stroke="none" />
              <path d="M4.500 169.500h6v6h-6zM12.500 169.500h6v6h-6zM20.500 169.500h6v6h-6zM4.500 178.500h16v13h-16z" /><path d="M9 181v8l6-4z" fill="#3d4148" />
              <circle cx="26" cy="206" r="4" fill="#44484e" stroke="none" /><path d="M24 205.500h4" stroke="#6c7076" />
            </svg>
          </div>

          <form class="cmd" @submit.prevent>
            <span class="grip"></span>
            <button type="button" aria-label="Close command line"><svg width="10" height="10" viewBox="0 0 10 10"><path d="M1 1l8 8M9 1L1 9" stroke="#c9cacb" stroke-width="2" /></svg></button>
            <button type="button" aria-label="Customize command line"><svg width="14" height="14" viewBox="0 0 14 14"><path d="M0 4.500L2 3l1.500 1.500L5 3 3.500 1C6 0 8.500 2 8 5l5.500 6.500-2 2L5 8C2.500 8.500.5 7 0 4.500z" fill="#c0c2c4" stroke="#333" stroke-width=".5" /></svg></button>
            <label class="entry">
              <svg width="15" height="14" viewBox="0 0 15 14"><rect x=".5" y=".5" width="14" height="13" fill="#a6abb4" stroke="#6c7079" /><path d="M3 4l3 3-3 3M7 10.500h5" fill="none" stroke="#44484f" stroke-width="1.300" /></svg>
              <i class="tri wide"></i>
              <input v-model="command" type="text" placeholder="Type a command" aria-label="Command">
              <i class="tri-u"></i>
            </label>
          </form>
        </div>
        <nav class="sheets" aria-label="Layouts">
          <button class="step" aria-label="First"><svg width="9" height="10" viewBox="0 0 9 10"><path d="M1 0v10" stroke="#666" stroke-width="1.500" /><path d="M8 0v10L3 5z" fill="#666" /></svg></button>
          <button class="step" aria-label="Previous"><svg width="9" height="10" viewBox="0 0 9 10"><path d="M7 0v10L2 5z" fill="#666" /></svg></button>
          <button class="step" aria-label="Next"><svg width="9" height="10" viewBox="0 0 9 10"><path d="M2 0v10l5-5z" fill="#666" /></svg></button>
          <button class="step" aria-label="Last"><svg width="9" height="10" viewBox="0 0 9 10"><path d="M8 0v10" stroke="#666" stroke-width="1.500" /><path d="M1 0v10l5-5z" fill="#666" /></svg></button>
          <button v-for="s in sheets" :key="s" class="sheet" :class="{ active: s === activeSheet }" @click="activeSheet = s">{{ s }}</button>
        </nav>
      </section>

      <footer class="status">
        <span class="coords">2674.8684, 1424.9569, 0.0000</span>
        <div class="segs">
          <button v-for="t in toggles" :key="t.icon" class="seg" :class="{ on: t.on }" :aria-pressed="t.on" :aria-label="t.icon" @click="t.on = !t.on">
            <svg width="16" height="16" viewBox="0 0 16 16" v-html="icons[t.icon]"></svg>
          </button>
        </div>
        <div class="segs right">
          <button class="seg model">MODEL</button>
          <button class="seg" aria-label="Layout"><svg width="16" height="16" viewBox="0 0 16 16" v-html="icons.layoutIcon"></svg></button>
          <button class="seg" aria-label="Quick view"><svg width="16" height="16" viewBox="0 0 16 16" v-html="icons.views"></svg></button>
        </div>
        <div class="segs gap12">
          <button class="seg ratio"><svg width="16" height="16" viewBox="0 0 16 16" v-html="icons.scaleA"></svg>1:1<i class="tri lg black"></i></button>
          <button class="seg" aria-label="Annotation visibility"><svg width="16" height="16" viewBox="0 0 16 16" v-html="icons.scaleVis"></svg></button>
          <button class="seg" aria-label="Auto scale"><svg width="16" height="16" viewBox="0 0 16 16" v-html="icons.scaleAuto"></svg></button>
        </div>
        <div class="segs gap6">
          <button class="seg" aria-label="Workspace switching"><svg width="16" height="16" viewBox="0 0 16 16" v-html="icons.gear"></svg></button>
          <button class="seg" aria-label="Lock"><svg width="16" height="16" viewBox="0 0 16 16" v-html="icons.lockUi"></svg></button>
          <button class="seg" aria-label="Hardware"><svg width="16" height="16" viewBox="0 0 16 16" v-html="icons.hardware"></svg></button>
        </div>
        <div class="tray-in">
          <svg width="16" height="16" viewBox="0 0 16 16" v-html="icons.wrench"></svg>
          <svg width="16" height="16" viewBox="0 0 16 16" v-html="icons.bulb"></svg>
        </div>
        <div class="segs gap6">
          <button class="seg thin" aria-label="Status menu"><i class="tri black"></i></button>
          <button class="seg" aria-label="Clean screen"><svg width="16" height="16" viewBox="0 0 16 16" v-html="icons.clean"></svg></button>
        </div>
        <svg class="resize" width="13" height="13" viewBox="0 0 13 13" aria-hidden="true"><path d="M9 1h2v2H9zM9 5h2v2H9zM5 5h2v2H5zM9 9h2v2H9zM5 9h2v2H5zM1 9h2v2H1z" fill="#ddd" /></svg>
      </footer>

      <aside v-if="showBalloon" class="balloon">
        <header>
          <svg width="16" height="16" viewBox="0 0 16 16" aria-hidden="true"><circle cx="8" cy="8" r="7.500" fill="#2450c0" stroke="#8fa4c8" /><path d="M8 3v2.200M8 6.500V13" stroke="#fff" stroke-width="2.200" /></svg>
          <h2>Performance Tuner</h2>
          <button aria-label="Close" @click="showBalloon = false"><svg width="9" height="9" viewBox="0 0 9 9"><path d="M1 1l7 7M8 1L1 8" stroke="#000" stroke-width="2" /></svg></button>
        </header>
        <p>The Performance Tuner has analyzed your graphics card and driver for optimized 3D graphics display for 3D features.</p>
        <p><a href="#">Click to view the results.</a></p>
        <p>To adjust settings manually, enter 3dconfig.</p>
        <svg class="tail" width="24" height="22" viewBox="0 0 24 22" aria-hidden="true"><path d="M1 0l19 19.500V0" fill="#ffffe1" stroke="#000" /></svg>
      </aside>
    </main>

    <footer class="taskbar">
      <button class="start" aria-label="Start">
        <svg width="38" height="38" viewBox="0 0 38 38">
          <defs><radialGradient id="orb" cx=".5" cy=".95" r=".9"><stop offset="0" stop-color="#3fd8ff" /><stop offset=".35" stop-color="#1c74b8" /><stop offset=".8" stop-color="#1d4a86" /><stop offset="1" stop-color="#a8c4dc" /></radialGradient></defs>
          <circle cx="19" cy="19" r="17.500" fill="url(#orb)" stroke="#123a6c" />
          <path d="M3 16a16 14 0 0 1 32 0c-8 4-24 4-32 0z" fill="#fff" opacity=".28" />
          <path d="M10 12c3-2 6-2 8-.5l-1.500 7C14 17 11 17 8.500 18.500z" fill="#f0532a" />
          <path d="M19.500 12c3 1.500 6 1.500 9-.3l-2 7c-3 2-6 1.700-8.500.3z" fill="#8cc63e" />
          <path d="M8 20.500c3-1.800 6-1.800 8.300-.3l-1.800 7C12 25.500 9 25.500 6 27z" fill="#3fa4e8" />
          <path d="M17.500 21c3 1.500 6 1.500 8.800-.2l-2 7c-3 1.700-6 1.500-8.500 0z" fill="#fbc821" />
        </svg>
      </button>
      <button class="tb ie" aria-label="Internet Explorer">
        <svg width="32" height="32" viewBox="0 0 32 32">
          <path d="M5 17C5 9 10 5 16.500 5S28 10 27.500 18H12c.5 5 7 6 8.500 2.500h6.500C25 26 21 28 16 28 9 28 5 23 5 17zm7-3h9c-.5-5-8.500-5-9 0z" fill="#5cc3f2" stroke="#1c7fc4" fill-rule="evenodd" />
          <path d="M27 10c2-5 1-8-4-7-6 1-15 9-19 18-2 5-1 9 4 8" fill="none" stroke="#f2c230" stroke-width="2.500" />
        </svg>
      </button>
      <button class="tb explorer" aria-label="Explorer">
        <svg width="34" height="34" viewBox="0 0 34 34">
          <path d="M3 6h10l2 2h13l2 3v18H3z" fill="#e8c860" stroke="#a8842a" /><path d="M5 4h8v3H5zM13 6h8v3h-8zM21 8h8v3h-8z" fill="#fff" /><path d="M6 4.500h3" stroke="#3a3" stroke-width="2" /><path d="M14 6.500h3" stroke="#c33" stroke-width="2" /><path d="M22 8.500h3" stroke="#36c" stroke-width="2" />
          <path d="M3 11h27v19H3z" fill="#fae9a4" stroke="#c9a54a" /><path d="M6 32V22h23v10h-5v-5H11v5z" fill="#8fd0ea" stroke="#3c8fb8" />
        </svg>
      </button>
      <button class="tb wmp" aria-label="Media Player">
        <svg width="28" height="28" viewBox="0 0 28 28"><path d="M10 2h14l2 2v20H12z" fill="#5f9fc8" stroke="#9fd0ea" /><path d="M2 3h20v22H2z" fill="#8cc4e4" stroke="#cfe8f7" /><circle cx="12" cy="14" r="9" fill="#f08020" stroke="#fff" /><path d="M9 8.500v11l9-5.500z" fill="#fff" /></svg>
      </button>
      <button class="tb framed" aria-label="Chrome">
        <svg width="30" height="30" viewBox="0 0 30 30"><circle cx="15" cy="15" r="14" fill="#f7c92a" /><path d="M15 15L2.900 8A14 14 0 0 1 27.100 8z" fill="#dd4b39" /><path d="M2.900 8A14 14 0 0 0 15 29l6-10.500L9 18.500z" fill="#1a9e55" /><path d="M15 8.500h12.300" stroke="#dd4b39" stroke-width="2" /><circle cx="15" cy="15" r="6.700" fill="#fff" /><circle cx="15" cy="15" r="5.300" fill="#4285f4" /></svg>
      </button>
      <button class="tb framed lit" aria-label="AutoCAD">
        <svg width="32" height="32" viewBox="0 0 32 32"><path d="M1 4h30v27H1z" fill="#161616" /><path d="M19 5l11 1v15l-7 1z" fill="#6a6a6a" /><path d="M20 8l9 2-7 3 8 3-6 4" fill="none" stroke="#bbb" stroke-dasharray="1 2" /><path d="M1 23h30v8H1z" fill="#d40000" /><path d="M4 22L10 0l5-1 8 20-5 2-2-5-6 1-1 5zM11 12l3.500-1-2-6z" fill="#ececec" fill-rule="evenodd" stroke="#777" stroke-width=".6" /></svg>
      </button>
      <button class="tb framed" aria-label="Recorder">
        <svg width="34" height="34" viewBox="0 0 34 34"><path d="M1.500 1.500h31v31h-31z" fill="#6f7898" stroke="#fff" /><rect x="7" y="9" width="19" height="18" rx="3" fill="#fff" /><circle cx="12" cy="9" r="4" fill="#fff" /><path d="M5 12h3v10H5zM25 13l5-2v13l-5-2z" fill="#fff" /><path d="M9 27l-2 3.500h5M24 27l2 3.500h-5" fill="none" stroke="#fff" stroke-width="1.500" /></svg>
      </button>
      <button class="tb framed green" aria-label="Screen capture">
        <svg width="32" height="32" viewBox="0 0 32 32"><rect width="32" height="32" rx="4" fill="#f04e23" /><circle cx="16" cy="17" r="6.500" fill="none" stroke="#74b52c" stroke-width="3.500" /><rect x="23" y="4" width="5" height="5" rx="1" fill="#5cd02c" /></svg>
      </button>
      <div class="systray">
        <svg width="9" height="5" viewBox="0 0 9 5" aria-hidden="true"><path d="M0 5l4.500-5L9 5z" fill="#fff" /></svg>
        <svg width="17" height="16" viewBox="0 0 17 16" aria-hidden="true"><path d="M1.500 1v14" stroke="#fff" stroke-width="1.500" /><path d="M3 2c3-1.500 5 1 9 0v7c-4 1-6-1-9 0z" fill="#fff" /><circle cx="11.500" cy="11" r="4.500" fill="#d8281c" /><path d="M9.500 9l4 4M13.500 9l-4 4" stroke="#fff" stroke-width="1.500" /></svg>
        <svg width="16" height="16" viewBox="0 0 16 16" aria-hidden="true"><path d="M5 3.500h10v8H5zM7 14.500h7M10 12v2" fill="#3a5a94" stroke="#fff" stroke-width="1.300" /><path d="M1 1v3h4V1M3 4v10h4" fill="none" stroke="#fff" stroke-width="1.300" /></svg>
        <svg width="16" height="16" viewBox="0 0 16 16" aria-hidden="true"><path d="M1 5h3l4-4v14l-4-4H1z" fill="#fff" /><path d="M10 5.500c1 1.500 1 3.500 0 5M12 3.500c2 3 2 6 0 9M14 2c2.500 4 2.500 8 0 12" fill="none" stroke="#fff" /></svg>
      </div>
      <time class="clock"><span>17:45</span><span>11-02-2016</span></time>
      <button class="showdesk" aria-label="Show desktop"></button>
    </footer>
  </div>
</template>

<style>
html, body { margin: 0; }
</style>

<style scoped>
* { box-sizing: border-box; }
button { font: inherit; color: inherit; background: none; border: 0; padding: 0; margin: 0; display: flex; align-items: center; white-space: nowrap; cursor: pointer; }
svg { display: block; flex: none; }
select { appearance: none; background: none; border: 0; padding: 0; margin: 0; font: inherit; color: inherit; flex: 1; min-width: 0; }
input { font: inherit; border: 0; padding: 0; min-width: 0; }
.defs { position: absolute; }
.desktop { min-height: 100vh; display: flex; flex-direction: column; font: 12px/16px Roboto, "Open Sans", sans-serif; color: #33363a;
  background: linear-gradient(90deg, #16264f, #2a4c96 60%, #4d86d6) 0 0 / 100% 40px no-repeat, #b9c1cc; }

.tri { width: 0; height: 0; border: 2px solid transparent; border-top: 3px solid #3c4045; border-bottom: 0; flex: none; }
.tri.lg { border-width: 4px; border-top-width: 4px; border-bottom: 0; }
.tri.dim, .tri.wide { border-top-color: #444; border-left-width: 3px; border-right-width: 3px; }
.tri.black { border-top-color: #000; border-left-width: 3px; border-right-width: 3px; }
.tri.light { border-top-color: #ddd; border-left-width: 3px; border-right-width: 3px; }
.tri-r { width: 0; height: 0; border: 4px solid transparent; border-left: 5px solid #000; border-right: 0; }
.tri-u { width: 0; height: 0; border: 4px solid transparent; border-bottom: 4px solid #333; border-top: 0; }

.window { position: relative; flex: 1; display: flex; flex-direction: column; margin: 2px 2px 0 1px; padding: 7px 7px 5px 8px; border: 1px solid #333b4a; border-radius: 7px;
  background: linear-gradient(180deg, transparent, #fff) 0 14px / 100% 16px no-repeat,
    linear-gradient(90deg, #b9cdf0 0, #fff 30px, #f6f9ff 190px, #c5d4f2 200px, #eef3fc 260px, #fbfcfe 400px, #f5f7fb 740px, #a9c2ee 790px, #7ba5ec 980px, #a9c4f0 1020px, #c5d4ef 1180px, #5a8fe0 1200px, #8cb8fa 1300px, #6fa3f2 1600px, #a9c8f8 1790px, #dbe8fb 1840px, #b9cfee 100%) 0 0 / 100% 30px no-repeat, #fafafa; }

.head { display: grid; grid-template-columns: 41px 1fr; grid-template-rows: 24px 20px; }
.app-menu { grid-column: 1; grid-row: 1 / 3; z-index: 1; height: 41px; padding: 0 3px; gap: 0; border: 1px solid #2c2c2c; background: linear-gradient(160deg, #c9c9c9, #8d8d8d 50%, #777); justify-content: space-between; }
.app-menu .tri { margin-left: -4px; }
.titlebar { grid-column: 2; grid-row: 1; display: flex; align-items: flex-start; }
.quick { display: flex; align-items: center; height: 23px; width: 428px; padding-left: 9px; background: linear-gradient(#979797, #636363); border-top: 1px solid #4b4b4b; }
.qb { width: 24px; height: 22px; }
.quick > .tri { margin: 0 9px 0 -3px; }
.quick > .tri + .workspace { margin-left: -4px; }
.workspace { display: flex; align-items: center; flex: 1; height: 21px; padding: 0 1px 0 2px; gap: 2px; color: #111; background: linear-gradient(#b4b4b4, #dcdcdc); border: 1px solid #e6e6e6; }
.qmore { width: 16px; height: 22px; justify-content: center; border: 1px solid #3a3a3a; }
.title { flex: 1; display: flex; justify-content: center; gap: 16px; margin: 0; font: inherit; color: #111; }
.info { display: flex; align-items: center; width: 444px; height: 24px; margin-top: 1px; background: linear-gradient(#7b7b7b, #5a5a5a); color: #fff; border-top: 1px solid #555; }
.expand { width: 14px; height: 23px; justify-content: center; background: linear-gradient(#8a8a8a, #555); border: 1px solid #444; }
.info input { width: 179px; height: 22px; padding-left: 3px; background: #f7f7f7; color: #333; }
.info input::placeholder { color: #6d6d6d; font-style: italic; opacity: 1; }
.ib { width: 24px; height: 22px; justify-content: center; }
.signin { gap: 5px; height: 22px; width: 120px; padding-left: 5px; }
.signin .tri { margin-left: auto; margin-right: 4px; }
.signin + .ib { margin-right: 1px; }
.rule { width: 1px; height: 18px; margin: 0 6px 0 9px; background: #8a8a8a; }
.info > .tri:last-child { margin-left: 3px; }
.wctl { display: flex; width: 103px; height: 22px; margin: -7px 0 0 20px; border: 1px solid #6c82ac; border-top: 0; border-radius: 0 0 5px 5px; background: linear-gradient(#c4d9f8, #9bbdf0); }
.wctl button { flex: 1; justify-content: center; border-right: 1px solid #6c82ac; }
.wctl .wide { flex: 0 0 46px; border-right: 0; }

.tabs { grid-column: 1 / 3; grid-row: 2; display: flex; align-items: flex-end; padding-left: 45px; background: #404040; color: #f0f0f0; }
.tabs button { height: 18px; padding: 0 10px; }
.tabs .active { background: linear-gradient(#dcdcdc, #f8f8f8); color: #333; border-radius: 2px 2px 0 0; }
.tabs .ribmin { padding-left: 20px; gap: 5px; }
.pill { display: flex; align-items: center; justify-content: center; width: 13px; height: 8px; border-radius: 2px; background: #e4e7ec; }
.pill .tri-u { border-width: 3px; border-top: 0; }

.ribbon { display: flex; height: 99px; margin: 0; border: 1px solid #404040; border-width: 0 1px; background: linear-gradient(#d6d6d6, #8d8d8d); box-shadow: inset 0 1px #fff, inset 0 -1px #fff; }
.panel { display: flex; flex-direction: column; flex: none; background: #fdfdfd; border-right: 1px solid #a2a2a2; }
.panel:last-child { border-right: 0; }
.pbody { flex: 1; display: flex; align-items: flex-start; padding-top: 6px; }
.ptitle { height: 18px; margin: 0 2px 1px; justify-content: center; gap: 7px; background: #ededed; border-top: 1px solid #dcdcdc; border-bottom: 1px solid #d0d0d0; }
.draw { width: 225px; } .modify { width: 250px; } .layers { width: 214px; } .annotation { width: 127px; } .block { width: 161px; }
.props { width: 205px; } .groups { width: 69px; } .utilities { width: 97px; } .clipboard { width: 79px; }
.big { flex-direction: column; flex: none; height: 70px; padding-top: 1px; }
.big svg { height: 32px; } .big span { margin: 4px 0 2px; }
.w36 { width: 36px; } .w42 { width: 42px; } .w44 { width: 44px; } .w56 { width: 56px; }
.smalls { display: flex; flex-direction: column; gap: 2px; }
.small { width: 24px; height: 22px; justify-content: center; border: 1px solid #c6c6c6; background: #fafafa; }
.small.on { background: #8fbdea; border-color: #1f5fa8; }
.draw .pbody { padding-left: 1px; }
.split { margin-left: 3px; } .split .small { width: 36px; justify-content: flex-end; gap: 2px; }
.drop { display: flex; align-items: center; justify-content: center; align-self: stretch; width: 13px; border-left: 1px solid #c6c6c6; }
.rows { display: flex; flex-direction: column; gap: 2px; }
.row { height: 22px; gap: 5px; }
.row .tri { margin-left: auto; }
.modify .pbody { padding-left: 7px; } .mc0 { width: 72px; } .mc1 { width: 69px; } .mc2 { width: 71px; } .mc2 .row { padding-right: 10px; }
.layers .pbody { padding-left: 2px; padding-right: 3px; }
.stack { flex-direction: column; gap: 2px; align-items: stretch; }
.lgroups { display: flex; gap: 4px; } .lgroup { display: flex; } .lgroup .small + .small { border-left: 0; }
.combo { display: flex; align-items: center; height: 22px; gap: 3px; padding: 0 2px; border: 1px solid #c6c6c6; background: linear-gradient(#fff, #f2f2f2); }
.lamp { padding-left: 4px; }
.swatch { width: 15px; height: 15px; border: 1px solid #000; background: #fff; margin-right: 1px; flex: none; }
.annotation .pbody { padding-left: 1px; } .annotation .rows { width: 66px; margin-left: 6px; }
.block .pbody { padding-left: 1px; } .block .rows { width: 108px; margin-left: 3px; }
.prow { display: flex; align-items: center; gap: 2px; } .prow .combo { flex: 1; }
.props .pbody { padding: 6px 2px 0 4px; }
.stroke { width: 59px; height: 1px; margin-left: 6px; background: #000; flex: none; } .stroke.long { width: 64px; margin-left: 1px; }
.props .ptitle { position: relative; } .launch { position: absolute; right: 4px; }
.groups .pbody { padding-left: 0; } .groups .big svg { height: 34px; } .groups .big span { margin-top: 2px; }
.utilities .pbody { padding-left: 7px; } .utilities .smalls { margin-left: 6px; }
.clipboard .pbody { padding-left: 6px; } .clipboard .smalls { margin-left: 5px; }

.workspace-area { flex: 1; display: flex; flex-direction: column; margin-top: 5px; border: 1px solid #9a9a9a; border-bottom: 0; box-shadow: 0 -5px #6a6a6a; }
.canvas { position: relative; flex: 1; min-height: 400px; background: #222830; border: 1px solid #6a6a6a; border-bottom: 0; overflow: hidden; }
.drawing { position: absolute; inset: 0; }
.vplabel { position: absolute; left: 4px; top: 5px; color: #e8e8e8; font-weight: 500; }
.vpctl { position: absolute; right: 10px; top: 8px; display: flex; gap: 9px; }
.ucs { position: absolute; left: 8px; bottom: 12px; }
.cube { position: absolute; right: 16px; top: 38px; width: 132px; height: 134px; font: bold 20px/20px "Liberation Sans", sans-serif; color: #adadad; }
.cube b { position: absolute; }
.cube .n { left: 59px; top: 1px; } .cube .s { left: 59px; bottom: 0; } .cube .w { left: 0; top: 57px; } .cube .e { right: 3px; top: 57px; }
.cube .top { left: 54px; top: 57px; font-size: 12px; color: #565a60; }
.wcs { position: absolute; right: 58px; top: 192px; width: 48px; height: 18px; padding: 0 5px; justify-content: space-between; border-radius: 4px; background: #9696a4; color: #5a5a66; font: 10px/16px "Liberation Sans", sans-serif; }
.navbar { position: absolute; right: 3px; top: 235px; width: 32px; height: 212px; border-radius: 4px; background: #5d6167; box-shadow: 0 0 0 1px #1b2027; }
.cmd { position: absolute; left: 379px; right: 379px; bottom: 1px; height: 26px; display: flex; align-items: stretch; background: #4b4e52; border: 1px solid #5e6165; }
.grip { width: 5px; margin: 4px 6px 4px 3px; background: repeating-linear-gradient(#9a9b9d 0 1px, transparent 1px 3px); }
.cmd button { width: 20px; justify-content: flex-start; }
.entry { flex: 1; display: flex; align-items: center; gap: 3px; padding: 0 3px 0 4px; background: #c2c3c5; }
.entry input { flex: 1; margin-left: 4px; background: none; font: italic 12px/16px "Liberation Mono", monospace; }
.entry input::placeholder { color: #7c7e82; opacity: 1; }
.sheets { display: flex; height: 17px; padding-left: 2px; background: #f0f0f0; border-bottom: 1px solid #777; color: #111; font: 11px/16px "Liberation Sans", sans-serif; }
.step { width: 15px; justify-content: center; border-right: 1px solid #888; background: #f7f7f7; }
.sheet { position: relative; width: 55px; padding-left: 5px; }
.sheet::after { content: ""; position: absolute; right: 2px; top: 0; bottom: 0; width: 1px; background: #444; transform: skewX(-20deg); }
.sheet.active { width: 51px; padding-left: 10px; background: #222830; color: #fff; clip-path: polygon(0 0, 100% 0, 46px 100%, 6px 100%); }

.status { display: flex; align-items: stretch; height: 24px; border-top: 1px solid #222; background: linear-gradient(#8c8c8c, #6f6f6f); color: #111; font-size: 11px; }
.coords { width: 196px; padding-left: 12px; line-height: 23px; background: #8e8e8e; }
.segs { display: flex; border-left: 1px solid #5c5c5c; }
.segs.right { margin-left: auto; } .gap12 { margin-left: 12px; } .gap6 { margin-left: 5px; }
.seg { width: 22px; height: 22px; justify-content: center; border-right: 1px solid #5c5c5c; background: linear-gradient(#cfcfcf, #a9a9a9); }
.seg.on { background: linear-gradient(#e2f3f8, #a3d3e2); }
.seg.model { width: 44px; font-size: 12px; } .seg.ratio { width: 51px; gap: 4px; font-size: 12px; } .seg.thin { width: 11px; }
.tray-in { display: flex; align-items: center; gap: 4px; width: 44px; margin: 2px 0 3px 5px; padding-left: 3px; border: 1px solid #5c5c5c; background: #979797; }
.resize { align-self: flex-end; margin-left: 4px; }

.balloon { position: absolute; right: 14px; bottom: 36px; width: 347px; height: 117px; padding: 8px 7px 0 15px; border: 1px solid #000; border-radius: 15px; background: #ffffe1; color: #111; line-height: 15px; }
.balloon header { display: flex; align-items: center; height: 17px; margin: 0 0 7px -6px; }
.balloon h2 { flex: 1; margin: 0 0 0 10px; font: bold 12px/16px Roboto, sans-serif; }
.balloon header button { width: 16px; height: 16px; justify-content: center; border: 1px solid #888; background: #ededed; }
.balloon p { margin: 0 0 7px; }
.balloon a { color: #1a12e8; }
.tail { position: absolute; left: 245px; top: 115px; }

.taskbar { display: flex; align-items: center; height: 40px; border-top: 1px solid #0c1a38; box-shadow: inset 0 1px #5f80bd; color: #fff;
  background: linear-gradient(90deg, #17346f 0, #1d3f8c 25%, #1b3d88 50%, #2456a4 80%, #2a5ba6 87%, #1a3566 90%, #1c3c74 100%); }
.start { width: 62px; padding-left: 8px; } .tb { height: 38px; justify-content: center; border-radius: 3px; }
.ie { width: 54px; margin-right: 6px; }
.explorer { width: 50px; border: 1px solid #fff4c0; background: linear-gradient(160deg, #f9eeb0, #e8c060 60%, #d88040); box-shadow: 4px 0 #3c5f9f, 7px 0 #22448a; }
.wmp { width: 74px; padding-left: 6px; }
.framed { width: 58px; margin-right: 4px; border: 1px solid #9fb1d6; background: linear-gradient(150deg, #8f9fcb, #3b5598 45%, #2f4d92); }
.framed.lit { background: linear-gradient(150deg, #dfe4f3, #9fadd4 45%, #7f92c4); }
.framed.green { border-color: #b8ffb8; background: linear-gradient(150deg, #8df58d, #35e035 45%, #22d822); }
.systray { display: flex; align-items: center; gap: 8px; margin-left: auto; } .systray svg:first-child { margin-right: 4px; }
.clock { display: flex; flex-direction: column; align-items: center; width: 82px; margin-left: 6px; line-height: 17px; }
.showdesk { width: 15px; height: 39px; border: 1px solid #7f97c0; background: linear-gradient(#5f7fae, #23437c); }
</style>
